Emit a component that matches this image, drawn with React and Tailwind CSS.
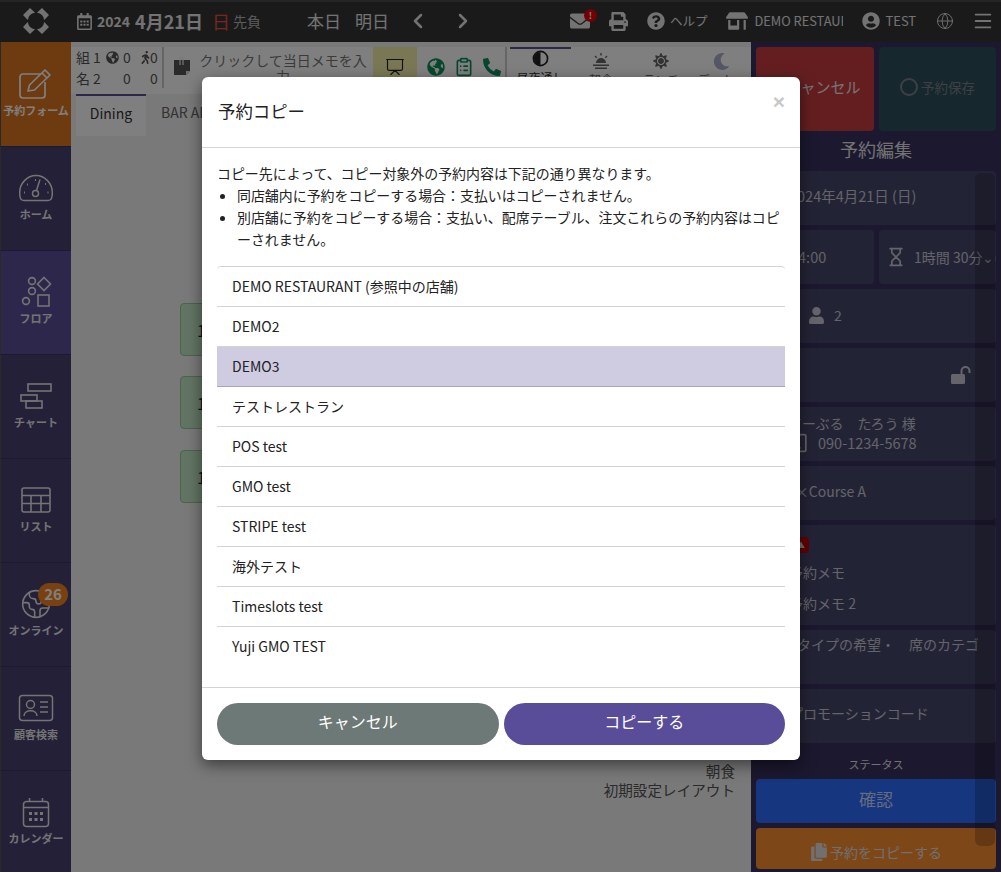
import React from 'react';
import { ChevronLeft, ChevronRight, Menu, Globe, Earth, Hourglass, Smartphone, Presentation, ClipboardList } from 'lucide-react';
import { FaEnvelope, FaPrint, FaQuestionCircle, FaStoreAlt, FaUserCircle, FaRegCalendarAlt, FaGlobeAmericas, FaWalking, FaPhoneAlt, FaSun, FaMoon, FaUser, FaCopy } from 'react-icons/fa';

const FONT = "font-['Noto_Sans_CJK_JP','Noto_Sans',sans-serif]";

const Pen = () => (
  <svg width="36" height="32" viewBox="0 0 36 32" fill="none" stroke="currentColor" strokeWidth="1.7" strokeLinejoin="round">
    <path d="M23 6H5a3 3 0 0 0-3 3v18a3 3 0 0 0 3 3h19a3 3 0 0 0 3-3V14" />
    <path d="M10 23l1.5-6L27 2l5 5-15.500 15z" />
    <path d="M24 5l5 5" />
  </svg>
);

const Dome = () => (
  <svg width="36" height="28" viewBox="0 0 36 28" fill="none" stroke="currentColor" strokeWidth="1.5">
    <path d="M6 26.500h24c2.500 0 3.700-2 4-4 .2-1 .3-2.500.3-4 0-9-7.400-17-16.300-17S1.700 9.500 1.700 18.500c0 1.500.1 3 .3 4 .3 2 1.500 4 4 4z" />
    <circle cx="17.500" cy="19.500" r="3" />
    <path d="M18.500 16.500 22 5.500" />
    <path d="M6 18.500h1M9 10.500h1M17 6h1M27 10h1M29.500 18.500h1" strokeWidth="2" />
  </svg>
);

const Shapes = () => (
  <svg width="34" height="32" viewBox="0 0 34 32" fill="none" stroke="currentColor" strokeWidth="1.6">
    <circle cx="13" cy="5" r="3.400" />
    <circle cx="13" cy="15" r="3.400" />
    <circle cx="7" cy="25" r="3.400" />
    <path d="M25 1.500 31.500 8 25 14.500 18.500 8Z" />
    <rect x="19" y="19" width="11" height="11" />
  </svg>
);

const Chart = () => (
  <svg width="34" height="28" viewBox="0 0 34 28" fill="none" stroke="currentColor" strokeWidth="1.600">
    <rect x="9" y="2" width="23" height="7" />
    <rect x="2" y="13" width="16" height="6" />
    <rect x="7" y="19" width="16" height="7" />
  </svg>
);

const Grid = () => (
  <svg width="32" height="28" viewBox="0 0 32 28" fill="none" stroke="currentColor" strokeWidth="1.600">
    <rect x="2" y="2" width="28" height="24" rx="2" />
    <path d="M2 9.500h28M2 17.500h28M11 9.500V26M21 9.500V26" />
  </svg>
);

const IdCard = () => (
  <svg width="36" height="28" viewBox="0 0 36 28" fill="none" stroke="currentColor" strokeWidth="1.500">
    <rect x="1.500" y="1.500" width="33" height="25" rx="3" />
    <circle cx="12.500" cy="10.500" r="4" />
    <path d="M6 22c0-7 13-7 13 0M22 8h8M22 13h8M22 18h8" />
  </svg>
);

const CalendarIcon = () => (
  <svg width="28" height="31" viewBox="0 0 28 31" fill="none" stroke="currentColor" strokeWidth="1.500">
    <rect x="1.500" y="4.500" width="25" height="25" rx="3" />
    <path d="M7.500 1v4M20.500 1v4M1.500 10.500h25" />
    <path d="M7 15h3v3H7zM12.500 15h3v3h-3zM18 15h3v3h-3zM7 21h3v3H7zM12.500 21h3v3h-3zM18 21h3v3h-3z" fill="currentColor" stroke="none" />
  </svg>
);

const Logo = () => (
  <svg width="28" height="28" viewBox="0 0 28 28" fill="currentColor">
    <path d="M8 1 13 5.800A8.500 8.500 0 0 0 5.800 13L1 8Z" />
    <path d="M20 1 15 5.800A8.500 8.500 0 0 1 22.200 13L27 8Z" />
    <path d="M8 27 13 22.200A8.500 8.500 0 0 1 5.800 15L1 20Z" />
    <path d="M20 27 15 22.200A8.500 8.500 0 0 0 22.200 15L27 20Z" />
  </svg>
);

const Breakfast = () => (
  <svg width="18" height="16" viewBox="0 0 18 16" fill="currentColor">
    <path d="M4 10a5 5 0 0 1 10 0ZM1 11.500h16v1.500H1zM3 14.500h12V16H3z" />
    <path d="M8.300 0h1.400v2.500H8.300zM2.500 3.500l1-1 1.700 1.800-1 1zM15.500 3.500l-1-1-1.700 1.800 1 1z" />
  </svg>
);

const MemoClip = () => (
  <svg width="16" height="20" viewBox="0 0 16 20" className="shrink-0 mt-1 text-[#555]">
    <path d="M0 4h16v11l-4 4H0z" fill="currentColor" />
    <path d="M12 19v-4h4z" fill="#ddd" />
    <path d="M6 9V2.500a1.500 1.500 0 0 1 3 0V9" fill="none" stroke="#eee" strokeWidth="1.200" />
  </svg>
);

const OpenLock = () => (
  <svg width="20" height="18" viewBox="0 0 20 18" fill="currentColor">
    <rect x="0" y="8" width="14" height="10" rx="1.500" />
    <path d="M10.500 8V5a4 4 0 0 1 8 0v2" fill="none" stroke="currentColor" strokeWidth="2" />
  </svg>
);

const navItems = [
  { label: 'ホーム', icon: <Dome /> },
  { label: 'フロア', icon: <Shapes />, active: true },
  { label: 'チャート', icon: <Chart /> },
  { label: 'リスト', icon: <Grid /> },
  { label: 'オンライン', icon: <Earth size={32} strokeWidth={1.200} />, badge: 26 },
  { label: '顧客検索', icon: <IdCard /> },
  { label: 'カレンダー', icon: <CalendarIcon /> },
];

const stores = ['DEMO RESTAURANT (参照中の店舗)', 'DEMO2', 'DEMO3', 'テストレストラン', 'POS test', 'GMO test', 'STRIPE test', '海外テスト', 'Timeslots test', 'Yuji GMO TEST'];

const Card = ({ className, children }) => (
  <div className={`rounded bg-[#47466d] text-[#c8c8d4] text-sm flex items-center ${className}`}>{children}</div>
);

const NavItem = ({ label, icon, active, badge, first }) => (
  <div className={`relative h-[104px] shrink-0 border-l border-l-[#555] flex flex-col items-center ${first ? 'bg-[#dd7421] text-white' : 'border-t border-t-[#3a3460] text-[#e8e8e8]'} ${active ? 'bg-[#5a4f96]' : ''}`}>
    <div className={`h-[34px] flex items-center justify-center ${first ? 'mt-[25px]' : 'mt-[24px]'}`}>{icon}</div>
    <span className="mt-px text-[11px] leading-4 font-bold whitespace-nowrap">{label}</span>
    {badge && (
      <span className="absolute top-[20px] left-[37px] w-[30px] h-[23px] rounded-full bg-[#f0821e] text-white text-[15px] font-bold flex items-center justify-center">{badge}</span>
    )}
  </div>
);

const Sidebar = () => (
  <aside className="w-[71px] shrink-0 bg-[#46406f] flex flex-col">
    <NavItem label="予約フォーム" icon={<Pen />} first />
    {navItems.map((item) => (
      <NavItem key={item.label} {...item} />
    ))}
  </aside>
);

const Header = () => (
  <header className="h-[42px] shrink-0 bg-[#353535] border-t-2 border-[#4a4a4a] flex items-center pb-0.5 text-[#e6e6e6] whitespace-nowrap">
    <div className="w-[71px] shrink-0 flex justify-center"><Logo /></div>
    <FaRegCalendarAlt size={17} className="ml-[5px] shrink-0" />
    <span className="ml-1 text-sm font-bold">2024</span>
    <span className="ml-[5px] text-[18px] font-bold">4月21日</span>
    <span className="ml-[9px] text-[18px] text-[#e8503c]">日</span>
    <span className="ml-[3px] text-sm text-[#b8b8b8]">先負</span>
    <span className="ml-[46px] text-[17px]">本日</span>
    <span className="ml-[14px] text-[17px]">明日</span>
    <ChevronLeft size={24} strokeWidth={2.500} className="ml-[17px] shrink-0" />
    <ChevronRight size={24} strokeWidth={2.500} className="ml-[21px] shrink-0" />
    <div className="relative ml-[95px] shrink-0">
      <FaEnvelope size={20} />
      <span className="absolute -top-0.5 left-3.5 w-[13px] h-[13px] rounded-full bg-red-600 text-white text-[9px] font-bold flex items-center justify-center">!</span>
    </div>
    <FaPrint size={19} className="ml-[19px] shrink-0" />
    <FaQuestionCircle size={18} className="ml-[19px] shrink-0" />
    <span className="ml-[5px] text-[12.500px]">ヘルプ</span>
    <FaStoreAlt size={22} className="ml-[19px] shrink-0" />
    <span className="ml-1.5 text-[12.800px] w-[89px] overflow-hidden">DEMO RESTAURANT</span>
    <FaUserCircle size={18} className="ml-[19px] shrink-0" />
    <span className="ml-[5px] text-[13px] w-[30px]">TEST</span>
    <Globe size={18} strokeWidth={1.200} className="ml-[21px] shrink-0" />
    <Menu size={22} className="ml-[18px] shrink-0" />
  </header>
);

const Toolbar = () => (
  <div className="h-[47px] shrink-0 flex mt-[5px] text-[#555] bg-white">
    <div className="w-[93px] h-[41px] pl-[5px] text-sm leading-5 border-r-2 border-[#ccc] grid grid-cols-[17px_13px_17px_16px_11px_8px] items-center">
      <span>組</span><span>1</span><FaGlobeAmericas size={13} /><span>0</span><FaWalking size={13} /><span>0</span>
      <span>名</span><span>2</span><span /><span>0</span><span /><span>0</span>
    </div>
    <div className="w-[209px] flex items-start pl-[10px] text-sm leading-4 text-[#777] pt-[5px] overflow-hidden">
      <MemoClip />
      <span className="ml-2 w-[170px] text-center">クリックして当日メモを入力</span>
    </div>
    <div className="w-[44px] h-[47px] bg-[#f4f1a8] flex justify-center pt-[10px] text-[#222] shrink-0"><Presentation size={20} strokeWidth={1.400} /></div>
    <div className="flex items-start gap-[9px] pl-2.5 pt-[10px] text-[#0f8f5c] w-[90px] border-r-2 border-[#ccc] h-[41px] shrink-0">
      <FaGlobeAmericas size={18} className="mt-px" /><ClipboardList size={20} /><FaPhoneAlt size={18} className="mt-px" />
    </div>
    <div className="w-[61px] ml-[3px] border-t-2 border-[#5a4f96] flex flex-col items-center text-xs text-[#333] shrink-0"><svg width="17" height="17" viewBox="0 0 18 18" className="mt-px mb-[3px]"><circle cx="9" cy="9" r="7.500" fill="none" stroke="#222" strokeWidth="1.800" /><path d="M9 2a7 7 0 0 0 0 14Z" fill="#222" /></svg>昼夜通し</div>
    <div className="w-[60px] flex flex-col items-center text-xs text-[#666] shrink-0"><div className="h-[18px] mt-[5px] mb-[2px] flex items-center"><Breakfast /></div>朝食</div>
    <div className="w-[60px] flex flex-col items-center text-xs text-[#666] shrink-0"><div className="h-[18px] mt-[5px] mb-[2px] flex items-center"><FaSun size={16} /></div>ランチ</div>
    <div className="w-[60px] flex flex-col items-center text-xs text-[#666] shrink-0"><div className="h-[18px] mt-[5px] mb-[2px] flex items-center"><FaMoon size={17} className="text-[#aab0c8]" /></div>ディナー</div>
  </div>
);

const Main = () => (
  <main className="relative flex-1 bg-[#f2f2f2] flex flex-col min-w-0 overflow-hidden">
    <Toolbar />
    <div className="flex text-sm">
      <div className="w-[70px] h-[42px] ml-[5px] bg-white border-t-2 border-[#5a4f96] flex items-center justify-center text-[#333] pb-1.5">Dining</div>
      <div className="ml-[15px] leading-[36px] text-[#666] whitespace-nowrap">BAR AREA</div>
    </div>
    {[303, 376, 450].map((top) => (
      <div key={top} className="absolute left-[109px] w-[40px] h-[53px] rounded-sm bg-[#c4eac8] border border-[#9cc4a0] flex items-center pl-4 text-[#123]" style={{ top: top - 42 }}>1</div>
    ))}
    <div className="mt-auto mb-[73px] mr-4 text-right text-[14.600px] leading-[19px] text-[#555]">朝食<br />初期設定レイアウト</div>
  </main>
);

const RightPanel = () => (
  <aside className="relative w-[250px] shrink-0 bg-[#37315e] flex flex-col px-[5px] pt-[5px] overflow-hidden">
    <div className="flex gap-[5px]">
      <div className="w-[118px] shrink-0 h-[84px] rounded bg-[#c93d41] text-[#e8e8e8] text-[15px] flex items-center justify-center pl-4 pb-1">キャンセル</div>
      <div className="flex-1 h-[84px] rounded bg-[#2d4f5c] text-[#7b808a] text-[13.500px] flex items-center justify-center gap-[3px] pb-1"><span className="w-[18px] h-[18px] rounded-full border-2 border-[#7b808a]" />予約保存</div>
    </div>
    <div className="text-center text-[#e4e4e4] text-[18px] h-[40px] leading-[37px]">予約編集</div>
    <div className="flex flex-col gap-[5px]">
      <Card className="h-[54px] pl-[33px] !items-start pt-[15px]"><span className="text-[14.500px]">2024年4月21日 (日)</span></Card>
      <div className="flex gap-[5px]">
        <Card className="w-[118px] h-[54px] pl-[34px]"><span className="text-[14.500px]">14:00</span></Card>
        <Card className="flex-1 h-[54px] pl-[7px] whitespace-nowrap overflow-hidden"><Hourglass size={20} className="mr-2 shrink-0" />1時間 30分⌄(A</Card>
      </div>
      <Card className="h-[54px] pl-[52px] pb-0.5"><FaUser size={17} className="mr-[9px]" />2</Card>
      <Card className="h-[54px] justify-end pr-[25px]"><OpenLock /></Card>
      <Card className="h-[54px] pl-[32px] pb-[3px] flex-col !items-start justify-center leading-5">
        <div>てーぶる　たろう 様</div>
        <div className="flex items-center ml-0.5"><Smartphone size={20} className="mr-2" /><span className="text-[14.500px]">090-1234-5678</span></div>
      </Card>
      <Card className="h-[54px] pl-[31px] pb-1">1×Course A</Card>
      <Card className="relative h-[100px] pl-[33px] flex-col !items-start text-[#9a9aa8]">
        <span className="absolute left-[37px] top-[12px] w-4 h-4 bg-red-700 rounded-sm flex items-center justify-center text-[8px] text-[#ddd]">▲</span>
        <div className="mt-[37px]">予約メモ</div>
        <div className="mt-[11px]">予約メモ 2</div>
      </Card>
      <Card className="h-[54px] pl-[27px] !items-start pt-1 text-[#8a8a98]"><span className="w-[195px] overflow-hidden whitespace-nowrap">席タイプの希望・　席のカテゴリ</span></Card>
      <Card className="h-[54px] pl-[33px] pb-1.5 text-[#8a8a98]">プロモーションコード</Card>
    </div>
    <div className="text-center text-[#e4e4e4] text-[11px] mt-[13px] h-[23px]">ステータス</div>
    <div className="h-[44px] shrink-0 rounded bg-[#2c6cfe] text-[#c8d8ff] text-[17px] flex items-center justify-center pb-1">確認</div>
    <div className="mt-[5px] h-[41px] shrink-0 rounded bg-[#fa8e30] text-[#e0e0e0] text-sm flex items-center justify-center pt-1.5"><FaCopy size={18} className="mr-0.5" />予約をコピーする</div>
    <div className="absolute left-[224px] top-[131px] w-5 h-[673px] rounded-md bg-black/20" />
  </aside>
);

const Modal = () => (
  <div className="absolute left-[202px] top-[77px] w-[598px] h-[683px] bg-white rounded-md shadow-[0_5px_15px_rgba(0,0,0,0.5)] flex flex-col text-[#222]">
    <div className="relative h-[71px] shrink-0 border-b border-[#d4d4d4] flex items-center pl-4 pb-0.5 text-[17.400px]">
      予約コピー
      <span className="absolute right-[15px] top-[15px] text-[#c8c8c8] font-['Liberation_Sans'] font-bold text-[21px] leading-5">×</span>
    </div>
    <div className="px-[15px] pt-[14px] flex-1">
      <div className="text-[13.950px] leading-[22px]">
        <p>コピー先によって、コピー対象外の予約内容は下記の通り異なります。</p>
        <ul className="list-disc pl-5">
          <li>同店舗内に予約をコピーする場合：支払いはコピーされません。</li>
          <li>別店舗に予約をコピーする場合：支払い、配席テーブル、注文これらの予約内容はコピーされません。</li>
        </ul>
      </div>
      <div className="mt-4 border-t border-[#d4d4d4] rounded-t">
        {stores.map((name) => (
          <div key={name} className={`h-10 flex items-center pl-[15px] text-sm pb-0.5 border-b last:border-b-0 ${name === 'DEMO3' ? 'bg-[#cfcce2] border-[#a8a5c4]' : 'border-[#d4d4d4]'}`}>{name}</div>
        ))}
      </div>
    </div>
    <div className="h-[73px] shrink-0 border-t border-[#d4d4d4] flex gap-[5px] px-[15px] pt-[15px]">
      <button className="flex-1 h-[42px] rounded-full bg-[#6d7976] text-white text-base pb-1.5">キャンセル</button>
      <button className="flex-1 h-[42px] rounded-full bg-[#594d99] text-white text-base pb-1.5">コピーする</button>
    </div>
  </div>
);

export default function App() {
  return (
    <div className={`relative w-[1001px] h-[872px] overflow-hidden flex flex-col bg-[#f2f2f2] ${FONT}`}>
      <Header />
      <div className="flex flex-1 min-h-0">
        <Sidebar />
        <Main />
        <RightPanel />
      </div>
      <div className="absolute inset-0 bg-black/50" />
      <Modal />
    </div>
  );
}
